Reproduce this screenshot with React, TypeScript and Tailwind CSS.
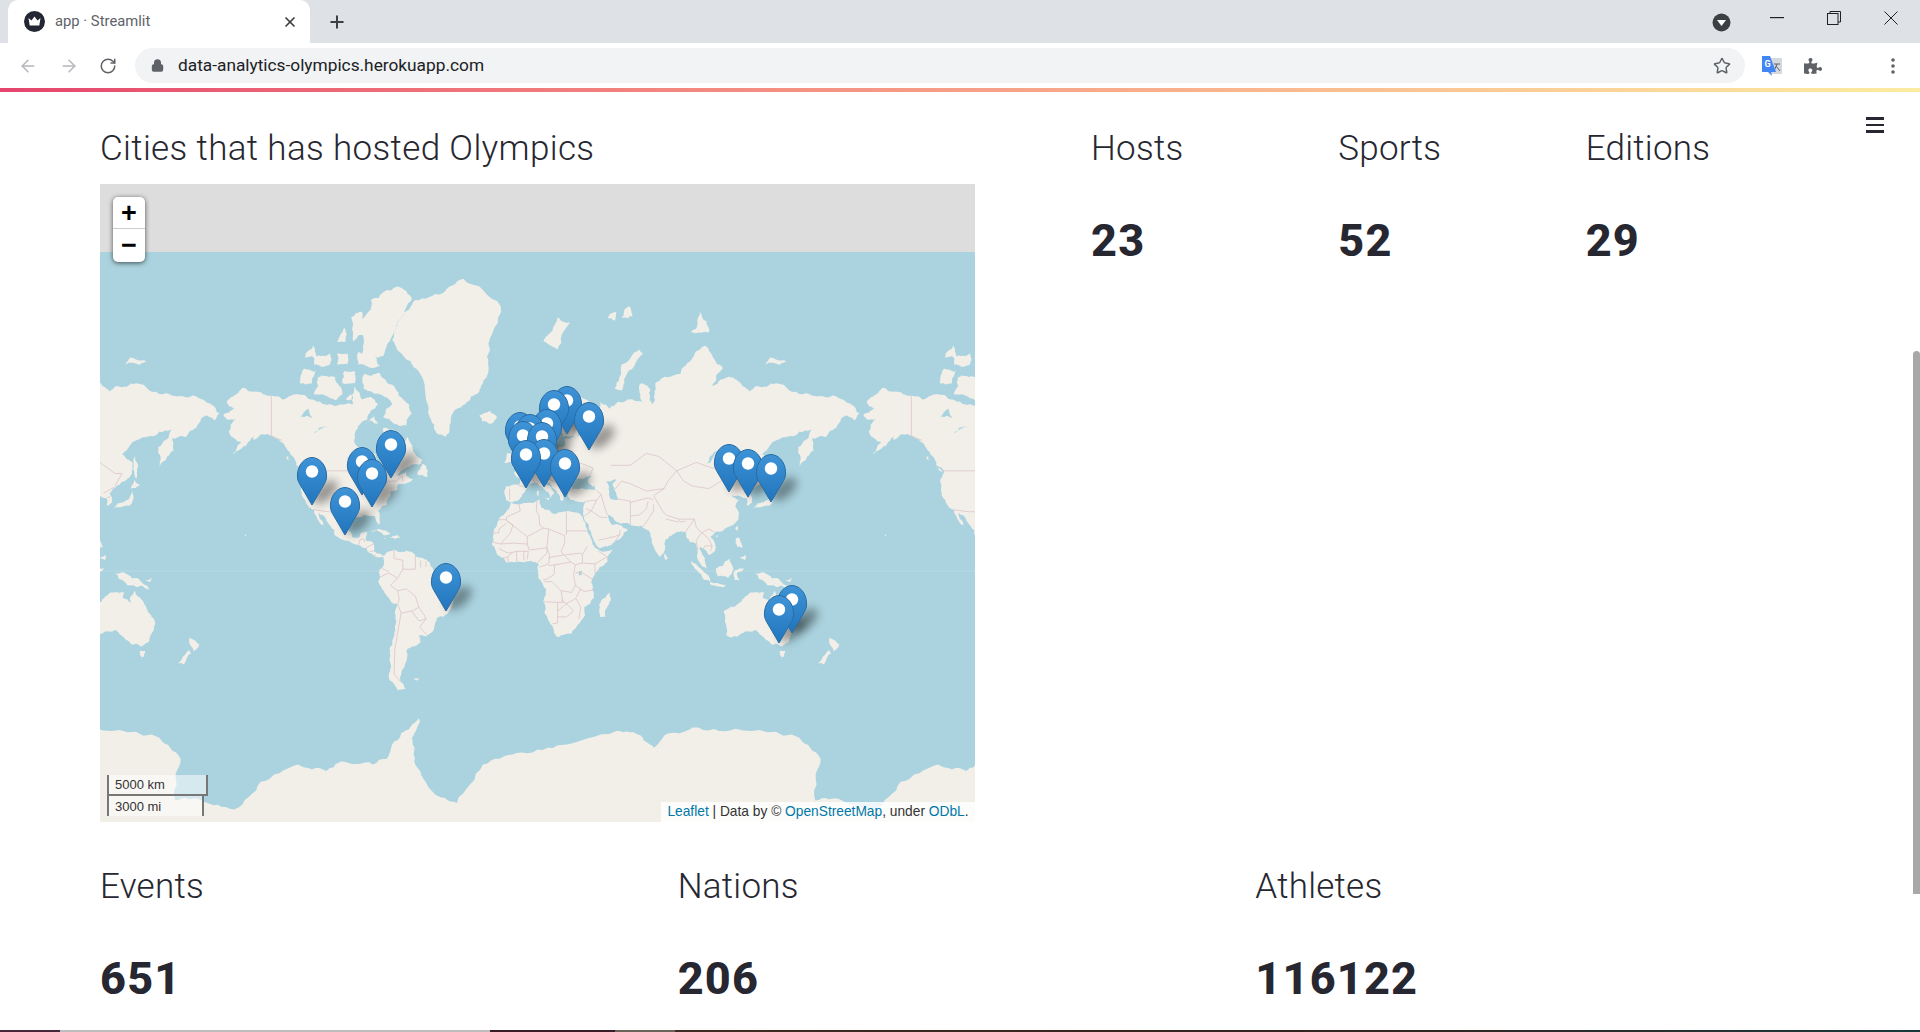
import { ArrowLeft, ArrowRight, Lock, Plus, RotateCw, Star, X } from "lucide-react";
import { FaPuzzlePiece } from "react-icons/fa";

// Map geometry: lon/lat pairs, projected with web mercator at 640px per world
const LAND: number[][] = [
  // North America
  [-168,65.6,-164,66.5,-162,67,-166,68.5,-163,69.5,-157,71.2,-150,70.5,-141,69.7,-135,69,-128,70,-122,69.8,-115,68.5,-108,68,-100,68,-95,68,-94,71.5,-90,69,-85,69.5,-81,68,-87,64.5,-93,62,-94.5,59,-92.5,57,-88,56.5,-82.5,55,-82,52.5,-79.5,51.3,-79,54.5,-77,56,-78,59,-78,62.4,-73,62,-70,61,-67,58.5,-64.5,60,-61.5,56.5,-56,53,-58,51.2,-65,50.2,-70,47,-65,49,-65,47,-61,46,-66,44,-70,43.5,-70,41.7,-74,40.5,-75.5,37.5,-76,35,-81,32,-80,27,-80.5,25.2,-82,27,-83,29.5,-85,29.7,-89,30.3,-90,29.2,-94,29.5,-97.3,27.5,-97.7,22.5,-95.5,18.7,-91.5,18.5,-90.5,21,-87,21.5,-88,17,-83.5,15,-83.5,11,-79.5,9.5,-77.3,8.7,-78,7.5,-80.5,7.5,-83,8.3,-85.7,10,-87.5,13,-92,14.5,-96,15.8,-101,17.5,-105.5,20,-105.5,22.5,-109,26,-112.5,30,-114.7,31.7,-112,26.5,-109.7,23,-112,25,-115,28,-117,32.5,-120.5,34.5,-122.5,37.5,-124.3,41,-124,46.5,-122.5,48.5,-127,51,-130,54.5,-134,58,-139,59.7,-146,60.7,-151.5,59.2,-150,61,-153,59,-158,56.5,-163,54.8,-158,58.5,-162,59.7,-165,61.5,-164,63.2,-161,64.5,-166,64.5],
  // Greenland and arctic islands
  [-73,78.2,-68,80.5,-60,82,-45,82.5,-33,83.5,-12,81.5,-18,77,-20,73,-24,70.5,-32,68,-40,65,-43,60,-48,61,-52,65,-54,69,-56,73,-66,76],
  [-62,66,-65,63,-72,63.5,-78,65,-73,68,-80,70,-89,71,-89,73.5,-80,73.7,-72,71.5,-67,69],
  [-117,70,-105,68.8,-101,70,-105,73,-115,73],
  [-125,72,-118,72,-116,74,-123,74.3],
  [-90,76.5,-78,76.2,-72,79,-62,82,-70,83,-85,82,-90,80],
  [-92,75,-80,74.8,-82,76,-92,76.7],
  [-117,75,-108,75,-108,76.5,-118,76.5],
  [-104,75,-98,75,-98,76.5,-104,76.5],
  [-122,76,-116,76,-117,77.5],
  [-104,78,-99,78,-100,79.5],
  [-99,69,-95,69,-96,70],
  [-95,78,-87,79,-90,81,-96,80.5],
  [-87,64,-81,63.5,-83,65.5],
  [-59,47.7,-53,46.7,-53,49,-56,51.5],
  [-101,72,-94,72,-94,74,-100,74],
  [-128,50.5,-123.5,48.4,-125,49],
  [-133,54,-131.5,54,-131.5,52.5],
  [-85,21.8,-80,23,-74.2,20.2,-78,19.9,-82,22.3],
  [-74.5,18.5,-70,19.8,-68.4,18.5,-71.5,17.7],
  [-78.3,18.3,-76.3,18.2,-77,17.8],
  [-156,20.2,-155,19.8,-155.6,19],
  // South America
  [-77.5,8.5,-75,11,-72,12,-68,10.7,-62,10.7,-60,8.5,-52,4.8,-50,1,-44.5,-2.5,-39,-3,-35,-5.5,-35,-9,-39,-14,-39,-18,-41,-22,-48,-25.5,-49,-29,-54,-34.5,-58.3,-34.2,-57,-37,-62,-39,-65,-41,-65,-45,-68,-50,-68.5,-52.5,-65.5,-55,-70,-55.5,-75,-51,-74,-43,-73,-37,-71.5,-30,-70,-18.5,-76,-14,-81,-6,-80,-2.5,-80,1,-77.5,4,-78,7],
  [-61,-51.5,-58,-51.3,-59,-52.3],
  // Africa
  [-6,35.8,-2,35,10,37.3,11,33.5,19,30.5,25,32,32,31,34.3,28,37,21,39.5,15,43.2,11.7,51,12,48,5,41,-2,39,-6,40.5,-15,35,-20,35.5,-24,32.5,-28,28,-33,20,-34.8,18,-33,15,-27,12,-17,13.5,-10,9,-1,9.5,4,5,5.8,-4,5,-8,4.5,-13,8.5,-17,14.5,-16,20,-13,27.5,-9.5,31],
  [49.5,-12,50,-16,47,-25,44,-25,43.5,-21,44.5,-16.5],
  // Eurasia
  [-9,37,-9.5,39,-9,43,-2,43.5,-1,46,-4.5,48.4,-1.5,48.7,1.5,50.8,4,52,7,53.5,8.5,55,8.2,57,10.5,57.5,10,54.5,14,54,19,54.5,21,57,24,57.5,24,59.3,30,60,23,60,21.5,62,25,65.5,22,65.8,17.5,62,18.5,59.5,16.5,56.5,13,55.5,11,59,8,58,5,59,5,62,12,66,18,70,26,71,33,69.5,41,67,36,64,40.5,64.7,44,66.5,44,68.5,49,67,54,68.5,60,69,68,68.5,67,72,72,71,73,68,75,72,82,73,89,73.5,96,76,103,77.5,113,74.5,107,71.5,118,73,124,71.5,128,70.5,132,71.5,143,72,158,70,169,69.6,180,69,180,65,177,62.5,171,60,163,59.7,164,56,162,55,156,50.5,155.5,57,163,62,156,61.5,141,58.5,135,54.7,141,52,138,46,132,43,128,40,129.5,36,126.5,34.5,126,38,121,39,118,39,122,37,120,34,122,30,119,25,113,22,109,21.5,106,19,109,13,105,9,102,12.5,100,13.5,103,5,104,1.3,101,3,98.5,8,98,15,94.5,16,92,21.5,87,21.5,80,15,80,11,77.5,8,73,18,72,21,67,24.8,61,25.2,57,26,52,27.5,48,30,51,25,55,25,59.5,22.5,52,16,43.5,12.7,39,21,35,28,34.5,31.5,36,36.5,30,36.5,26,38.5,26,40.5,23,40,23.5,38,22.5,36.5,19.5,41,14,45,12.5,44.5,18,40,16,38,12,42,8.5,44.3,3,43,0,39.5,-2,36.8,-5.5,36],
  [-180,69,-172,66.5,-170,66,-173,64.3,-178,65.5,-180,65],
  // Europe and Asia islands
  [-5.5,50,1.5,51.2,0,53.5,-2,56,-2,57.7,-5,58.6,-6,56,-3,54,-5,52],
  [-10,52,-6,52.2,-6,55,-8.5,55],
  [-24,65.5,-18,66.5,-14,65,-18,63.4,-22.5,64],
  [12,78,20,80.5,27,80,20,77],
  [52,71,56,70.7,58,73,68,76.5,66,77,56,75],
  [95,79,105,79,100,81],
  [137,75,145,75,150,75.5,140,76],
  [48,80.5,52,80.2,53,81],[56,80.5,62,80.6,60,81.5],
  [142,54,143.5,49,143,46,142,48],
  [130,33,135,34,140,35,141.5,38,141,41,139.5,38.5,136,36,132,35],
  [140,42,145,43.3,142,45.5],
  [120,23,121.7,25,121,22],
  [108.7,19.3,110.5,20,110,18.5],
  [120,18,122,18.5,124,13,121,13.5],
  [122,8,126,9,125.5,6],
  [80,9.7,82,7,80.5,6],
  [95,5.5,98,4,104,-2,106,-6,102,-4.5],
  [105.5,-6.5,114.5,-7.7,114,-8.7,106,-7.5],
  [109,1.5,113,3,117,7,119,1,116,-4,110,-3],
  [119.5,-5,120,0.5,125,1.5,121,-1,122.5,-5],
  [131,-1,138,-1.8,145,-5,150.5,-10.5,143,-9,138,-8,133,-4],
  [148,-5.5,152,-4,151,-6],
  [8.5,41,9.7,41,9.5,39,8.5,39],
  [12.5,38,15.5,38,15,36.7],
  // Australia and New Zealand
  [113.5,-22,122,-18,126,-14,130,-12,136.5,-12,135.5,-15,140,-17.5,142,-11,145.5,-15,149,-21,153,-26,153,-31,150,-37,146,-39,140,-38,136,-35,131,-31.5,124,-33,118,-35,115,-34,115,-30],
  [145,-41,148,-41,147,-43.5,146,-43.5],
  [173,-35,178.5,-38,175,-41.5,174,-39],
  [172.7,-40.6,174,-42,170,-46.5,166.5,-46,171,-42],
  // Antarctica
  [-180,-85,-180,-78,-162,-79,-147,-75.6,-126,-73,-110,-74,-102,-72.5,-84,-73,-76,-72,-68,-67,-58,-63.5,-62,-68,-60,-73,-50,-77,-36.5,-78.3,-22,-73,-3,-71,20,-69.5,53,-66.5,68,-68,74,-70,80,-67.5,96,-65.7,120,-66,156,-68,168,-72,165,-78,180,-78,180,-85],
];

const WATER: number[][] = [
  [28,41.5,33,42,41,41.3,41,43,37,45,39,47,35,46,33,46,30.5,46,28,43.5],
  [47,45,53,46,51,44,53,40,54,37,50,37.3,49,40],
  [-92,46.8,-85,46.8,-85,48,-89,48.7],
  [-87.5,42,-86,42,-85,46,-87,45.5],
  [-84,43.5,-81.5,43.3,-80,45,-84,46],
  [-83,41.7,-79,42.8,-79,43,-83,42.2],
  [-79.5,43.4,-76.5,43.5,-76.5,44,-79,43.9],
  [-125,65,-118,65,-120,67],
  [-117,61,-109,62.5,-114,62.5],
  [-99,51,-96.5,51,-98,54],
  [32,0,34,0,33.5,-2.5,32,-2.5],
  [104,51.5,106,52,110,55.7,109,55.7],
  [31,60,33,60.5,32,61.5],
];

const BORDERS: number[][] = [
  [-141,69.7,-141,60.3,-135,59],
  [-123,49,-95,49,-89,48,-83,46,-82,42.5,-79,43,-75,45,-71,45,-67.5,47,-67,44.8],
  [-117,32.5,-108,31.5,-106,31.7,-101,29.7,-97.3,26],
  [-92,14.5,-91,17.5,-89,17.8,-88.5,16],
  [-87.5,13,-83.5,15],[-85.7,11,-83.5,11],[-83,8.3,-82.5,9.5],
  [-72,12,-72,7,-67,6,-67,1],
  [-60,8.5,-60,5,-60,1,-67,1,-70,-4,-74,-8,-70,-11,-65,-10,-60,-14,-58,-20,-55,-24,-54,-26,-57.6,-30,-53.5,-33.7],
  [-70,-18,-68,-23,-70,-33,-71.5,-40,-72,-50,-68.5,-52.5],
  [-70,-11,-69,-16,-70,-18],[-68,-23,-62,-22,-58,-20],[-62,-22,-58,-27,-54,-26],
  [-80,-3.5,-75,-1,-70,-4],[-78.5,1.3,-75,-0.2],[-57,6,-57,2],[-54,5.5,-54,2.3],
  [-1.5,35,-1,32,-8.7,29,-8.7,27.3,3,19,12,23.5,15,23,24,19.5,24,15.5,22,11,23.5,9],
  [8.5,37,8,32,9.5,30,10,25,12,23.5],[25,32,25,20],[25,22,36.8,22],
  [-12,15,-5,15.5,3,15,3,19],[-13,27.7,-8.7,27.7],[-17,21,-13,21,-13,23,-8.7,26],
  [-8.7,27.3,-5,25,-6.5,21,-12,15,-16.5,16],[3,15,4,11.7,14,13,15,23],
  [3,6.5,3.5,11],[14,13,14,10,8.7,4.8],[14,13,15.5,9,15,4,9.8,2.2],
  [15,7.5,23.5,9,27.5,5,18.5,3.5,15,3],
  [12.5,-6,17,-6,22,-11,28,-12,30,-8,29,-2,30,3.5,27.5,5],
  [12,-5,14,-4.5,18,-2,18.5,3.5],[12,-17,23,-17.5,22,-11],[20,-17.5,20,-28,17,-28.5],
  [20,-22,25,-18,29,-22,25,-25,20,-25],[22,-16,25,-18,30,-15.5,33,-10],
  [30.5,-15.5,33,-20,32,-26],[30,-8,35,-11.5,40.5,-10.5],[34,-1,30,-1],[39.5,-4.5,34,-1],
  [34,4.5,41,4,41,-1.5],[41,4,48,8,43,11],[36.8,14,34,9,34,4.5],[24,9,33,10,34,9],[30,3.5,34,4.5],
  [-8,4.5,-8,8,-5,10.5,-3,11,3.5,11],[-3,5,-3,11],[1,6,1,11],[-13,12.5,-8,10,-5,10.5],[-11,7,-8,8],
  [-1.8,43.3,3,42.5],[-7,37,-7,42],[2.5,51,8,49,7.5,47.5,6,46,7.5,43.8],[7,53.5,6,51,8,49],
  [14,54,15,51,19,49.5,22.5,49,24,51,23.5,54,21,55],[10,47.5,17,48,22.5,48,29,45.5],
  [13,46.5,21,44,23,41.3],[28,41,26,41.8],[22,44,28,43.7],[24,51,32,52,40,50,38,47],
  [30,46,27,48,22.5,48],[28,56,32,52],[28,60,31,63,29,69.5],[12,61,16,68,20,69,28,70],[20,69,24,66],
  [36,36.5,42,37,44.5,39.5,41.5,41.5],[44.5,39.5,46,35,48,30],[35,29.5,39,32,44,29,48,28.7],
  [43,17,52,19,55,20,52,16],[55,22.5,55,20],[36,33,39,32,42,37],[61,25.2,61,36.5,54,37.5],
  [52,41.5,56,45,61,44,70,41,80,42,82,45,87,49],[50,51,61,51,70,55,77,54,87,49],
  [87,49,98,52,107,50,116,50,120,53,127,50,131,48,135,48,131,43],
  [87,49,91,45,96,43,105,42,112,45,116,48,116,50],
  [80,42,74,39,79,32,81,30,88,28,97,28,98,24,101,21,105,23,108,21.5],
  [68,24,71,28,74,32,74,35],[61,36,66,37,71,38,74,37],[61,29.5,66,30,70,33,71,36.5],
  [92,21.5,97,28],[101,21,98,17,99,11],[101,21,105,18,107,14,106,11],[102,12.5,103,14,107,14],
  [124.5,40,128,41.5,130.5,42.5],[126.5,38,128.5,38.5],[81,28,88,26.5],[88,28,89,26.5,92,27],
];

// tip positions of the markers, relative to the map's top-left
const PINS: [number, number][] = [
  [467, 250],[454, 254],[489, 266],[447, 273],[420, 276],[430, 278],[423, 285],[442, 286],[291, 294],
  [629, 308],[444, 303],[426, 304],[648, 313],[671, 318],[262, 311],[465, 313],[212, 321],[272, 323],
  [245, 351],[346, 427],[692, 449],[679, 459],
];

const px = (lon: number) => 422 + (lon * 640) / 360;
const py = (lat: number) => 387 - (320 / Math.PI) * Math.log(Math.tan(Math.PI / 4 + (lat * Math.PI) / 360));

const noise = (x: number, y: number) => {
  const s = Math.sin(x * 12.9898 + y * 78.233) * 43758.5453;
  return (s - Math.floor(s)) * 2 - 1;
};

// breaks a long straight edge into a wobbly coastline
function wobble(ax: number, ay: number, bx: number, by: number, depth: number): string {
  const len = Math.hypot(bx - ax, by - ay);
  if (depth === 0 || len < 2.5) return `L${bx.toFixed(1)} ${by.toFixed(1)}`;
  const amp = Math.min(len * 0.16, 2.6) * noise(ax + bx, ay + by);
  const mx = (ax + bx) / 2 + (-(by - ay) / len) * amp;
  const my = (ay + by) / 2 + ((bx - ax) / len) * amp;
  return wobble(ax, ay, mx, my, depth - 1) + wobble(mx, my, bx, by, depth - 1);
}

function toLand(flat: number[]) {
  const n = flat.length / 2;
  let d = `M${px(flat[0]).toFixed(1)} ${py(flat[1]).toFixed(1)}`;
  for (let i = 0; i < n; i++) {
    const j = (i + 1) % n;
    const atSeam = Math.abs(flat[i * 2]) === 180 && Math.abs(flat[j * 2]) === 180;
    d += wobble(px(flat[i * 2]), py(flat[i * 2 + 1]), px(flat[j * 2]), py(flat[j * 2 + 1]), atSeam ? 0 : 3);
  }
  return d + "Z";
}

function toPath(flat: number[]) {
  let d = "";
  for (let i = 0; i < flat.length; i += 2) {
    d += `${i === 0 ? "M" : "L"}${px(flat[i]).toFixed(1)} ${py(flat[i + 1]).toFixed(1)}`;
  }
  return d;
}

const landPath = LAND.map(toLand).join("");
const waterPath = WATER.map(toLand).join("");
const borderPath = BORDERS.map(toPath).join("");

function WorldMap() {
  return (
    <svg viewBox="0 0 875 638" className="absolute inset-0 h-full w-full">
      <defs>
        <linearGradient id="pinFill" x1="0" y1="0" x2="0" y2="1">
          <stop offset="0" stopColor="#3f93d6" />
          <stop offset="1" stopColor="#2075bd" />
        </linearGradient>
        <filter id="pinShadow" x="-60%" y="-60%" width="220%" height="220%">
          <feGaussianBlur stdDeviation="5" />
        </filter>
        <filter id="soft">
          <feGaussianBlur stdDeviation="0.35" />
        </filter>
        <path
          id="pin"
          d="M0 0L-12.6-21.5C-13.8-23.8-14.6-26-14.6-29-14.6-41-6.5-47.5 0-47.5 6.5-47.5 14.6-41 14.6-29 14.6-26 13.8-23.8 12.6-21.5Z"
        />
      </defs>
      <rect y="68" width="875" height="570" fill="#aad3df" />
      <line x1="0" x2="875" y1="387" y2="387" stroke="#b4d9e4" strokeWidth="1" />
      <g filter="url(#soft)">
        {[-640, 0, 640].map((dx) => (
          <g key={dx} transform={`translate(${dx} 0)`}>
            <path d={landPath} fill="#f2efe9" />
            <path d={waterPath} fill="#aad3df" />
            <path d={borderPath} fill="none" stroke="#dcc4c9" strokeWidth="0.8" />
          </g>
        ))}
      </g>
      {PINS.map(([x, y], i) => (
        <ellipse
          key={i}
          cx={x + 13}
          cy={y - 13}
          rx="15"
          ry="8"
          transform={`rotate(-42 ${x + 13} ${y - 13})`}
          fill="#000"
          opacity="0.38"
          filter="url(#pinShadow)"
        />
      ))}
      {PINS.map(([x, y], i) => (
        <g key={i} transform={`translate(${x} ${y})`}>
          <use href="#pin" fill="url(#pinFill)" stroke="#2a6ca3" strokeWidth="1" />
          <circle cx="0" cy="-33.5" r="6.2" fill="#fff" />
        </g>
      ))}
    </svg>
  );
}

function MapPanel() {
  return (
    <div className="relative h-[638px] w-[875px] overflow-hidden bg-[#dddddd] font-['Liberation_Sans',sans-serif]">
      <WorldMap />
      <div className="absolute left-[13px] top-[13px] flex w-[32px] flex-col rounded-[5px] bg-white text-black shadow-[0_1px_5px_rgba(0,0,0,0.65)]">
        <div className="flex h-[32px] items-center justify-center border-b border-[#cccccc] pt-[1px] text-[27px] font-bold leading-none">+</div>
        <div className="flex h-[33px] items-center justify-center text-[27px] font-bold leading-none">−</div>
      </div>
      <div className="absolute bottom-[6px] left-[7px] flex flex-col items-start text-[13px] leading-[17px] text-[#333333]">
        <div className="h-[21px] w-[101px] border-x-2 border-b-2 border-[#777777] bg-white/50 pl-[6px] pt-[1px]">5000 km</div>
        <div className="h-[20px] w-[97px] border-x-2 border-[#777777] bg-white/50 pl-[6px] pt-[2px]">3000 mi</div>
      </div>
      <div className="absolute bottom-0 right-0 flex h-[20px] w-[314px] items-center justify-center bg-white/80 text-[13.75px] text-[#333333]">
        <span>
          <span className="text-[#0078a8]">Leaflet</span> | Data by © <span className="text-[#0078a8]">OpenStreetMap</span>, under{" "}
          <span className="text-[#0078a8]">ODbL</span>.
        </span>
      </div>
    </div>
  );
}

function Stat({ label, value }: { label: string; value: string }) {
  return (
    <div className="flex flex-col">
      <div className="text-[35px] font-light leading-[40px] tracking-[0.25px]">{label}</div>
      <div className="mt-[44px] text-[45px] font-extrabold leading-[56px] tracking-[1.2px]">{value}</div>
    </div>
  );
}

function Favicon() {
  return (
    <svg width="21" height="21" viewBox="0 0 21 21">
      <circle cx="10.5" cy="10.5" r="10.5" fill="#232733" />
      <path d="M4.5 7l3 2.6 3-4 3 4 3-2.6-1.2 7.5H5.7z" fill="#fff" />
    </svg>
  );
}

function TabBar() {
  return (
    <div className="flex h-[43px] shrink-0 items-stretch bg-[#dee1e6] pl-[8px]">
      <div className="flex w-[302px] items-center rounded-t-[10px] bg-white pl-[16px] pr-[12px]">
        <Favicon />
        <span className="ml-[10px] flex-1 text-[14.8px] text-[#5f6368]">app · Streamlit</span>
        <X size={16} strokeWidth={2.6} className="text-[#3c4043]" />
      </div>
      <div className="ml-[17px] flex items-center">
        <Plus size={20} strokeWidth={2.4} className="text-[#3c4043]" />
      </div>
      <div className="ml-auto flex items-center">
        <svg width="19" height="19" viewBox="0 0 19 19" className="mr-[39px] mt-[2px]">
          <circle cx="9.5" cy="9.5" r="9" fill="#3c4043" />
          <path d="M5 7h9l-4.5 6z" fill="#fff" />
        </svg>
        <svg width="14" height="2" viewBox="0 0 14 2" className="mb-[7px] mr-[43px]">
          <rect width="14" height="1.2" fill="#202124" />
        </svg>
        <svg width="14" height="14" viewBox="0 0 14 14" className="mb-[7px] mr-[43px]" fill="none" stroke="#202124" strokeWidth="1">
          <rect x="0.5" y="2.5" width="10.5" height="11" />
          <path d="M3 2.5V0.5h10.5V11H11" />
        </svg>
        <svg width="14" height="14" viewBox="0 0 14 14" className="mb-[7px] mr-[22px]" fill="none" stroke="#202124" strokeWidth="1">
          <path d="M0.5 0.5l13 13M13.5 0.5l-13 13" />
        </svg>
      </div>
    </div>
  );
}

function TranslateIcon() {
  return (
    <svg width="22" height="22" viewBox="0 0 22 22" className="ml-[16px]">
      <rect x="9" y="3" width="12" height="16" fill="#d5d9df" />
      <path d="M13 9h6M16 9l-3 7M15 11l4 5" stroke="#5f6368" strokeWidth="1" fill="none" />
      <path d="M1 1h8l6 16h-5l1 4-4-4H1z" fill="#4285f4" />
      <text x="3.5" y="12" fontSize="9" fontWeight="700" fill="#fff" fontFamily="Roboto, sans-serif">G</text>
    </svg>
  );
}

function Toolbar() {
  return (
    <div className="flex h-[45px] shrink-0 items-center bg-white">
      <div className="flex w-[135px] items-center pl-[18px]">
        <ArrowLeft size={20} strokeWidth={1.8} className="text-[#b4b7bb]" />
        <ArrowRight size={20} strokeWidth={1.8} className="ml-[21px] text-[#b4b7bb]" />
        <RotateCw size={18} strokeWidth={2} className="ml-[20px] text-[#5f6368]" />
      </div>
      <div className="flex h-[35px] w-[1610px] items-center rounded-full bg-[#f1f3f4] pl-[16px] pr-[14px]">
        <Lock size={13} strokeWidth={3} className="text-[#5f6368]" fill="#5f6368" />
        <span className="ml-[14px] flex-1 pt-[1px] text-[17.3px] text-[#202124]">data-analytics-olympics.herokuapp.com</span>
        <Star size={18} strokeWidth={2} className="text-[#5f6368]" />
      </div>
      <TranslateIcon />
      <FaPuzzlePiece size={18} className="ml-[21px] text-[#5f6368]" />
      <svg width="4" height="16" viewBox="0 0 4 16" className="ml-[69px]" fill="#5f6368">
        <circle cx="2" cy="2" r="1.8" />
        <circle cx="2" cy="8" r="1.8" />
        <circle cx="2" cy="14" r="1.8" />
      </svg>
    </div>
  );
}

export default function App() {
  return (
    <div className="flex h-[1032px] flex-col overflow-hidden bg-white font-['Roboto',sans-serif] text-[#262730]">
      <TabBar />
      <Toolbar />
      <div className="h-[4px] shrink-0 bg-gradient-to-r from-[#e5446d] to-[#fbeca0]" />

      <main className="relative flex-1 pl-[100px] pt-[37px]">
        <div className="flex">
          <div className="w-[875px]">
            <div className="mb-[15px] text-[35px] font-light leading-[40px] tracking-[0.35px]">Cities that has hosted Olympics</div>
            <MapPanel />
          </div>
          <div className="ml-[116px] grid w-[742px] grid-cols-3">
            <Stat label="Hosts" value="23" />
            <Stat label="Sports" value="52" />
            <Stat label="Editions" value="29" />
          </div>
        </div>
        <div className="mt-[45px] grid w-[1733px] grid-cols-3">
          <Stat label="Events" value="651" />
          <Stat label="Nations" value="206" />
          <Stat label="Athletes" value="116122" />
        </div>

        {/* hamburger and scrollbar float above the page */}
        <div className="absolute right-[36px] top-[25px] flex w-[18px] flex-col gap-[4px]">
          <div className="h-[2.5px] bg-[#262730]" />
          <div className="h-[2.5px] bg-[#262730]" />
          <div className="h-[2.5px] bg-[#262730]" />
        </div>
        <div className="absolute right-0 top-[259px] h-[543px] w-[7px] rounded-t-[4px] bg-[#a8a8a8]" />
      </main>

      <div className="flex h-[2px] shrink-0">
        <div className="w-[60px] bg-[#46283a]" />
        <div className="w-[430px] bg-[#bdbdbd]" />
        <div className="w-[125px] bg-[#3a1c28]" />
        <div className="w-[60px] bg-[#6a6458]" />
        <div className="flex-1 bg-gradient-to-r from-[#3f2c22] via-[#33231f] to-[#17393b]" />
      </div>
    </div>
  );
}
